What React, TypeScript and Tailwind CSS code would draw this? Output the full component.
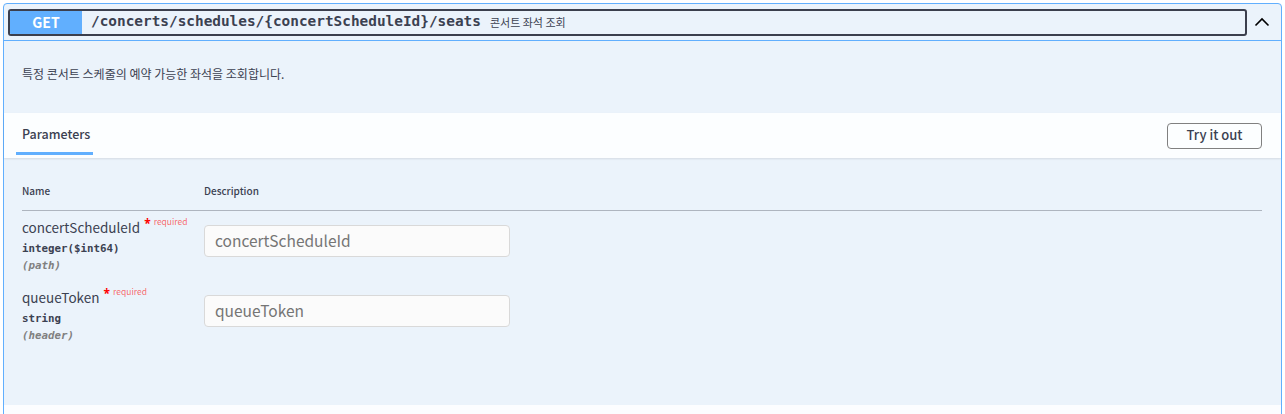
import React from "react";

const sans = "font-['Noto_Sans_CJK_KR','Noto_Sans',sans-serif]";
const mono = "font-['DejaVu_Sans_Mono','Liberation_Mono',monospace]";

function Param({ name, type, loc, top }: { name: string; type: string; loc: string; top?: string }) {
  return (
    <div className={`flex ${top ?? ""}`}>
      <div className="w-[182px] shrink-0">
        <div className="flex items-start h-[22px]">
          <span className={`${sans} text-[13.5px] leading-[22px] text-[#3b4151]`}>{name}</span>
          <span className="ml-[4px] mt-[2px] text-[12px] leading-[12px] text-[#ff0000] font-bold">*</span>
          <span className={`${sans} ml-[3px] text-[8.5px] leading-[12px] text-[rgba(255,0,0,0.6)] -mt-[1px]`}>required</span>
        </div>
        <div className={`${mono} mt-[3px] text-[10.8px] leading-[15px] font-bold text-[#3b4151]`}>{type}</div>
        <div className={`${mono} mt-[2px] text-[10.8px] leading-[15px] italic font-bold text-[#808080]`}>{loc}</div>
      </div>
      <div className="mt-[9px]">
        <div className={`${sans} w-[306px] h-[32px] border border-[#d9d9d9] rounded-[4px] bg-[#fbfbfb] px-[10px] flex items-center text-[15.5px] text-[#757575]`}>
          {name}
        </div>
      </div>
    </div>
  );
}

export default function App() {
  return (
    <div className="w-[1285px] h-[414px] overflow-hidden bg-white pt-[3px] px-[3px]">
      <div className="border border-[#61affe] rounded-[4px] bg-[#ebf3fb] h-[430px] flex flex-col">
        {/* summary */}
        <div className="h-[37px] border-b border-[#61affe] flex items-center pl-[4px] pr-[4px]">
          <div className="flex-1 h-[27px] border-2 border-[#3b3f4d] rounded-[3px] flex items-center overflow-hidden">
            <div className={`${sans} w-[72px] h-full bg-[#61affe] text-white text-[14px] font-bold flex items-center justify-center`}>GET</div>
            <div className={`${mono} ml-[9px] text-[14.4px] font-bold text-[#3b4151]`}>/concerts/schedules/&#123;concertScheduleId&#125;/seats</div>
            <div className={`${sans} ml-[9px] text-[11px] text-[#3b4151]`}>콘서트 좌석 조회</div>
          </div>
          <div className="w-[30px] flex items-center justify-center">
            <svg width="16" height="10" viewBox="0 0 16 10" fill="none">
              <path d="M1.5 8.5 L8 2 L14.5 8.5" stroke="#000" strokeWidth="1.6" />
            </svg>
          </div>
        </div>
        {/* description */}
        <div className="h-[72px] pl-[18px] pt-[24px]">
          <p className={`${sans} text-[12px] leading-[18px] text-[#3b4151]`}>특정 콘서트 스케줄의 예약 가능한 좌석을 조회합니다.</p>
        </div>
        {/* parameters header */}
        <div className="h-[45px] bg-[rgba(255,255,255,0.85)] shadow-[0_1px_2px_rgba(0,0,0,0.1)] flex items-center pl-[12px] pr-[19px] relative">
          <div className="flex flex-col h-full">
            <div className={`${sans} h-full flex items-center px-[6px] text-[12.5px] font-medium text-[#3b4151] pb-[3px]`}>Parameters</div>
          </div>
          <div className="absolute left-[12px] bottom-[3px] w-[77px] h-[3px] bg-[#61affe]" />
          <div className="flex-1" />
          <div className={`${sans} w-[95px] h-[26px] border border-[#808080] rounded-[4px] flex items-center justify-center text-[13px] font-medium text-[#3b4151] pb-[2px]`}>Try it out</div>
        </div>
        {/* table */}
        <div className="pl-[18px] pr-[19px]">
          <div className={`${sans} flex h-[53px] items-end pb-[12px] border-b border-[rgba(59,65,81,0.35)] text-[10px] leading-[14px] font-medium text-[#3b4151]`}>
            <div className="w-[182px]">Name</div>
            <div>Description</div>
          </div>
          <Param name="concertScheduleId" type="integer($int64)" loc="(path)" top="mt-[5px]" />
          <Param name="queueToken" type="string" loc="(header)" top="mt-[13px]" />
        </div>
        <div className="flex-1" />
        <div className="h-[27px] bg-[#fcfdff]" />
      </div>
    </div>
  );
}
